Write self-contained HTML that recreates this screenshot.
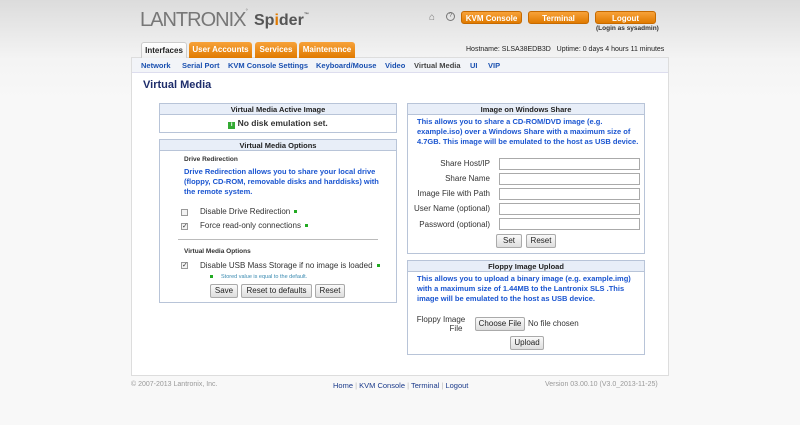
<!DOCTYPE html>
<html><head><meta charset="utf-8"><style>
*{box-sizing:border-box;margin:0;padding:0}
body{width:800px;height:425px;overflow:hidden;font-family:"Liberation Sans",Arial,sans-serif;background:linear-gradient(#dcdcdc 0,#f4f4f4 60px,#f8f8f8 100px);position:relative;font-size:8px;color:#333}
.abs{position:absolute}
.logo{left:140px;top:9px;font-size:20px;color:#777;letter-spacing:-1px;font-weight:300}
.spider{left:254px;top:12px;font-size:16px;font-weight:bold;color:#555}
.btn{background:linear-gradient(#f7a23a,#e07a00);color:#fff;font-weight:bold;font-size:8px;text-align:center;border-radius:3px;height:13px;line-height:13px;border:1px solid #c66a00}
.tab{top:42px;height:16px;line-height:16px;font-size:8px;font-weight:bold;text-align:center;border-radius:3px 3px 0 0;color:#fff;background:linear-gradient(#f7a23a,#e07a00)}
.main{left:131px;top:57px;width:538px;height:319px;background:#fff;border:1px solid #ddd}
.sub{left:132px;top:58px;width:536px;height:15px;background:#f2f4f8;border-bottom:1px solid #dde;font-size:7.5px;color:#1a50b0;font-weight:bold}
.sub span{position:absolute;top:3px}
.box{border:1px solid #b8c4d8;background:#fff}
.hd{background:#e8eef8;border-bottom:1px solid #b8c4d8;height:11px;line-height:11px;text-align:center;font-weight:bold;font-size:7.5px;color:#222}
.blue{color:#1a55d0;font-weight:bold;font-size:7.5px;line-height:10px}
.b{font-size:8px;background:linear-gradient(#fafafa,#ddd);border:1px solid #aaa;border-radius:2px;height:14px;line-height:12px;text-align:center;color:#222}
.inp{border:1px solid #aaa;height:12px;background:#fff}
.lbl{text-align:right;font-size:8px;color:#333}
.dot{display:inline-block;width:3px;height:3px;background:#2a2;margin-left:4px;vertical-align:middle}
.cb{width:7px;height:7px;border:1px solid #999;background:#f3f3f3;font-size:7px;line-height:6px;text-align:center;color:#333}
</style></head><body>
<div class="abs logo">LANTRONIX<span style="font-size:6px;vertical-align:top">°</span></div>
<div class="abs spider">Sp<span style="color:#e07a00">i</span>der<span style="font-size:5px;vertical-align:top">™</span></div>
<div class="abs" style="left:429px;top:12px;font-size:10px;color:#777">⌂</div>
<div class="abs" style="left:446px;top:12px;width:9px;height:9px;border:1px solid #777;border-radius:50%;font-size:6px;text-align:center;line-height:7px;color:#666">?</div>
<div class="abs btn" style="left:461px;top:11px;width:61px">KVM Console</div>
<div class="abs btn" style="left:528px;top:11px;width:61px">Terminal</div>
<div class="abs btn" style="left:595px;top:11px;width:61px">Logout</div>
<div class="abs" style="left:596px;top:25px;font-size:6.5px;font-weight:bold;color:#333">(Login as sysadmin)</div>
<div class="abs" style="left:466px;top:46px;font-size:7px;color:#222;white-space:nowrap">Hostname: SLSA38EDB3D &nbsp;&nbsp;Uptime: 0 days 4 hours 11 minutes</div>
<div class="abs main"></div>
<div class="abs tab" style="left:141px;width:46px;background:linear-gradient(#fff,#eee);color:#222;border:1px solid #ccc;border-bottom:none;height:17px">Interfaces</div>
<div class="abs tab" style="left:189px;width:63px">User Accounts</div>
<div class="abs tab" style="left:255px;width:42px">Services</div>
<div class="abs tab" style="left:299px;width:56px">Maintenance</div>
<div class="abs sub"><span style="left:9px">Network</span><span style="left:50px">Serial Port</span><span style="left:96px">KVM Console Settings</span><span style="left:184px">Keyboard/Mouse</span><span style="left:253px">Video</span><span style="left:282px;color:#444">Virtual Media</span><span style="left:338px">UI</span><span style="left:356px">VIP</span></div>
<div class="abs" style="left:143px;top:79px;font-size:11px;font-weight:bold;color:#1e2d6b">Virtual Media</div>

<div class="abs box" style="left:159px;top:103px;width:238px;height:30px"><div class="hd">Virtual Media Active Image</div>
<div style="text-align:center;font-weight:bold;font-size:8.5px;margin-top:3px"><span style="display:inline-block;width:7px;height:7px;background:#3a3;color:#fff;font-size:6px;line-height:7px">i</span> No disk emulation set.</div></div>

<div class="abs box" style="left:159px;top:139px;width:238px;height:164px"><div class="hd">Virtual Media Options</div>
<div class="abs" style="left:24px;top:16px;font-size:6.5px;font-weight:bold">Drive Redirection</div>
<div class="abs blue" style="left:24px;top:27px;width:200px">Drive Redirection allows you to share your local drive (floppy, CD-ROM, removable disks and harddisks) with the remote system.</div>
<div class="abs cb" style="left:21px;top:69px"></div><div class="abs" style="left:40px;top:67px;font-size:8px">Disable Drive Redirection<span class="dot"></span></div>
<div class="abs cb" style="left:21px;top:83px">✓</div><div class="abs" style="left:40px;top:81px;font-size:8px">Force read-only connections<span class="dot"></span></div>
<div class="abs" style="left:18px;top:99px;width:200px;border-top:1px solid #bbb"></div>
<div class="abs" style="left:24px;top:108px;font-size:6.5px;font-weight:bold">Virtual Media Options</div>
<div class="abs cb" style="left:21px;top:122px">✓</div><div class="abs" style="left:40px;top:121px;font-size:8px">Disable USB Mass Storage if no image is loaded<span class="dot"></span></div>
<div class="abs" style="left:50px;top:134px;font-size:5.5px;color:#3a8ab0"><span class="dot" style="margin:0 8px 0 0"></span>Stored value is equal to the default.</div>
<div class="abs b" style="left:50px;top:144px;width:28px">Save</div>
<div class="abs b" style="left:81px;top:144px;width:71px">Reset to defaults</div>
<div class="abs b" style="left:155px;top:144px;width:30px">Reset</div>
</div>

<div class="abs box" style="left:407px;top:103px;width:238px;height:151px"><div class="hd">Image on Windows Share</div>
<div class="abs blue" style="left:9px;top:13px;width:225px">This allows you to share a CD-ROM/DVD image (e.g. example.iso) over a Windows Share with a maximum size of 4.7GB. This image will be emulated to the host as USB device.</div>
<div class="abs lbl" style="left:0;top:55px;width:82px">Share Host/IP</div><div class="abs inp" style="left:91px;top:54px;width:141px"></div>
<div class="abs lbl" style="left:0;top:70px;width:82px">Share Name</div><div class="abs inp" style="left:91px;top:69px;width:141px"></div>
<div class="abs lbl" style="left:0;top:85px;width:82px">Image File with Path</div><div class="abs inp" style="left:91px;top:84px;width:141px"></div>
<div class="abs lbl" style="left:0;top:100px;width:82px">User Name (optional)</div><div class="abs inp" style="left:91px;top:99px;width:141px"></div>
<div class="abs lbl" style="left:0;top:116px;width:82px">Password (optional)</div><div class="abs inp" style="left:91px;top:114px;width:141px"></div>
<div class="abs b" style="left:88px;top:130px;width:26px">Set</div>
<div class="abs b" style="left:118px;top:130px;width:30px">Reset</div>
</div>

<div class="abs box" style="left:407px;top:260px;width:238px;height:95px"><div class="hd">Floppy Image Upload</div>
<div class="abs blue" style="left:9px;top:13px;width:225px">This allows you to upload a binary image (e.g. example.img) with a maximum size of 1.44MB to the Lantronix SLS .This image will be emulated to the host as USB device.</div>
<div class="abs" style="left:8px;top:54px;width:50px;text-align:center;font-size:8px;line-height:9px">Floppy Image<br><span style="margin-left:30px">File</span></div>
<div class="abs b" style="left:67px;top:56px;width:50px">Choose File</div>
<div class="abs" style="left:120px;top:58px;font-size:8px">No file chosen</div>
<div class="abs b" style="left:102px;top:75px;width:34px">Upload</div>
</div>

<div class="abs" style="left:131px;top:381px;font-size:7px;color:#999">© 2007-2013 Lantronix, Inc.</div>
<div class="abs" style="left:333px;top:381px;font-size:7.5px;color:#1a3a8a">Home <span style="color:#bbb">|</span> KVM Console <span style="color:#bbb">|</span> Terminal <span style="color:#bbb">|</span> Logout</div>
<div class="abs" style="left:545px;top:381px;font-size:7px;color:#999">Version 03.00.10 (V3.0_2013-11-25)</div>
</body></html>
